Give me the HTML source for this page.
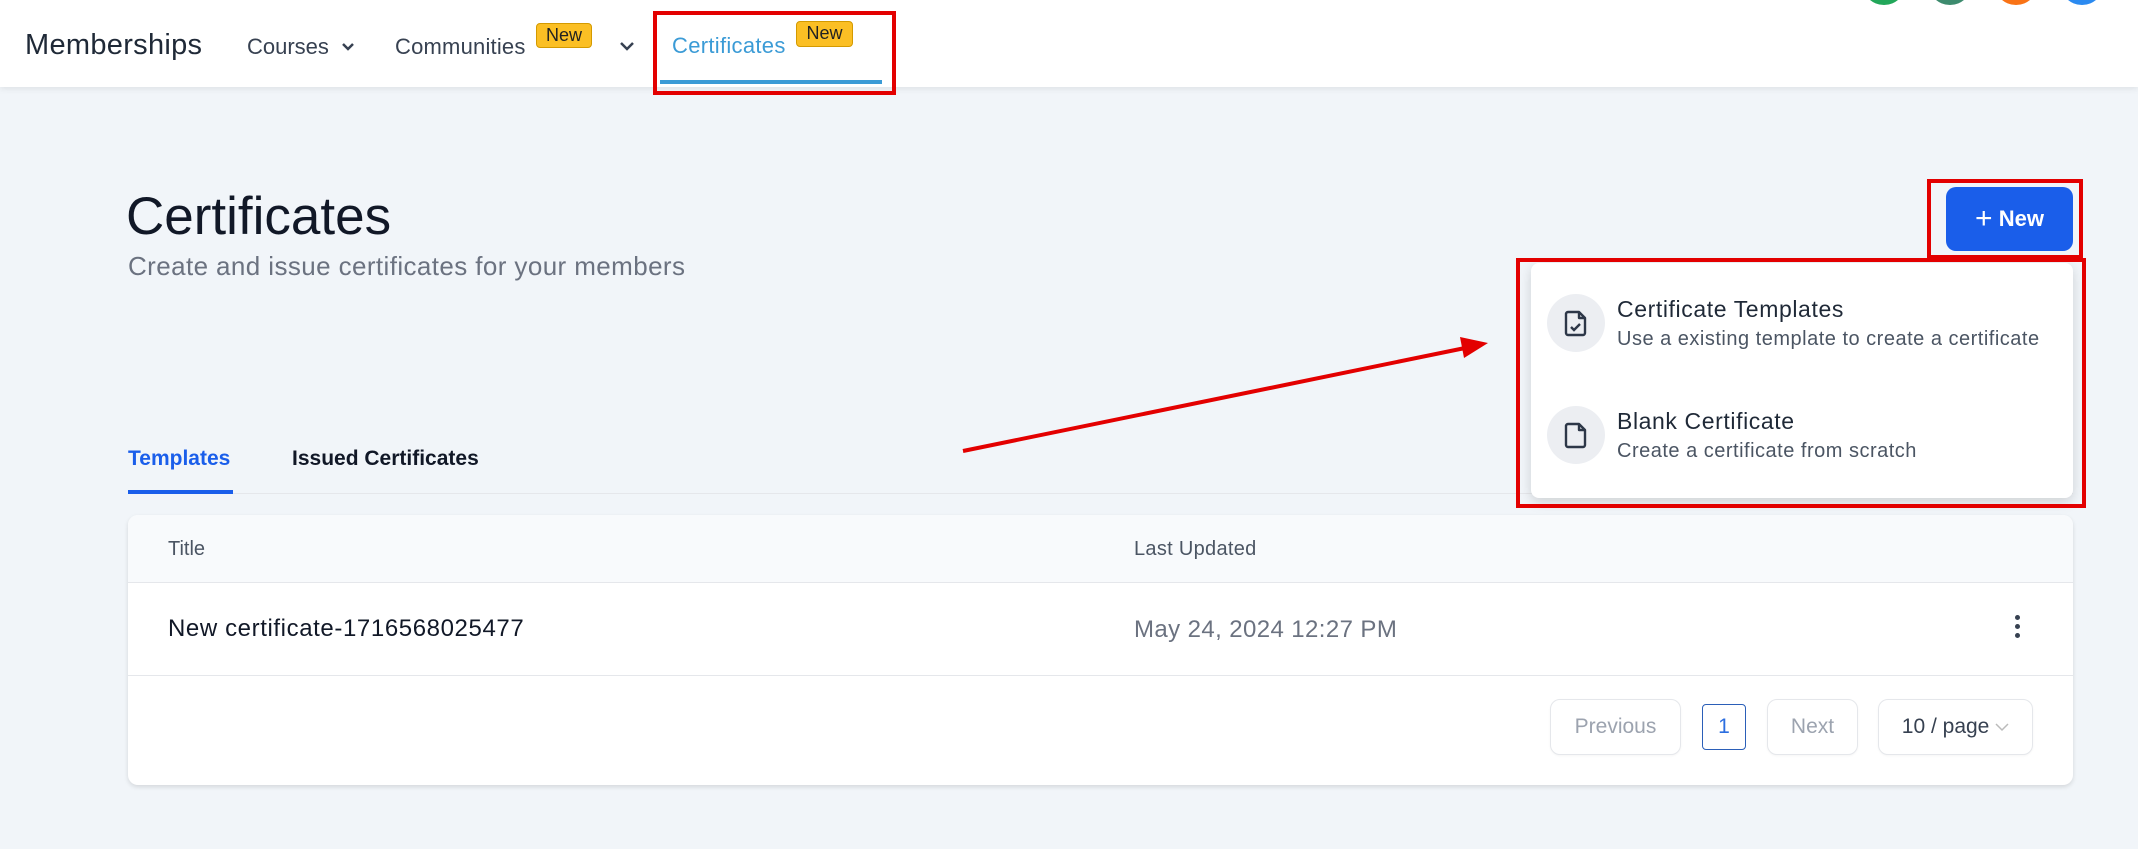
<!DOCTYPE html>
<html><head><meta charset="utf-8"><style>
*{box-sizing:border-box;margin:0;padding:0}
body{width:2138px;height:849px;background:#f1f5f9;font-family:"Liberation Sans",sans-serif;position:relative;overflow:hidden}
.a{position:absolute;white-space:nowrap}
.nav{position:absolute;left:0;top:0;width:2138px;height:87px;background:#fff;box-shadow:0 2px 6px rgba(0,0,0,.08)}
.badge{position:absolute;background:#fbbf24;border:1px solid #d49a00;border-radius:4px;font-size:18px;color:#222;text-align:center;line-height:22px}
.av{position:absolute;width:44px;height:44px;border-radius:50%;top:-39px}
.btn{position:absolute;border:1px solid #e5e7eb;border-radius:10px;background:#fff;font-size:21px;color:#9ca3af;text-align:center;box-shadow:0 1px 2px rgba(0,0,0,.04)}
.ic{position:absolute;width:58px;height:58px;border-radius:50%;background:#eceef2}
</style></head><body>
<div class="nav"></div>
<div class="a" style="left:25px;top:29px;font-size:29px;color:#1f2937;letter-spacing:0.3px">Memberships</div>
<div class="a" style="left:247px;top:34px;font-size:22px;color:#374151">Courses</div>
<svg class="a" style="left:341px;top:42px" width="14" height="10"><path d="M2 2l5 5 5-5" stroke="#374151" stroke-width="2.5" fill="none"/></svg>
<div class="a" style="left:395px;top:34px;font-size:22px;color:#374151;letter-spacing:0.2px">Communities</div>
<div class="badge" style="left:536px;top:23px;width:56px;height:25px">New</div>
<svg class="a" style="left:619px;top:40px" width="16" height="12"><path d="M2 3l6 6 6-6" stroke="#374151" stroke-width="2.5" fill="none"/></svg>
<div class="a" style="left:672px;top:33px;font-size:22px;color:#3b9bd6;letter-spacing:0.3px">Certificates</div>
<div class="badge" style="left:796px;top:21px;width:57px;height:26px">New</div>
<div class="a" style="left:660px;top:80px;width:222px;height:4px;background:#3b9bd6"></div>
<div class="a" style="left:653px;top:11px;width:243px;height:84px;border:4px solid #e30000"></div>
<div class="av" style="left:1862px;background:#22a75a"></div>
<div class="av" style="left:1928px;background:#3d8b6e"></div>
<div class="av" style="left:1994px;background:#f97316"></div>
<div class="av" style="left:2060px;background:#2b8af0"></div>

<div class="a" style="left:126px;top:186px;font-size:53px;color:#111827">Certificates</div>
<div class="a" style="left:128px;top:251px;font-size:26px;color:#6b7280;letter-spacing:0.4px">Create and issue certificates for your members</div>

<div class="a" style="left:1946px;top:187px;width:127px;height:64px;background:#1a5eea;border-radius:10px;color:#fff;font-size:22px;font-weight:bold;line-height:64px;text-align:center"><span style="font-weight:normal;font-size:30px;vertical-align:-2px">+</span> New</div>
<div class="a" style="left:1927px;top:179px;width:156px;height:80px;border:4px solid #e30000"></div>

<div class="a" style="left:128px;top:447px;font-size:21px;font-weight:bold;color:#1a5eea">Templates</div>
<div class="a" style="left:292px;top:447px;font-size:21px;font-weight:bold;color:#111827">Issued Certificates</div>
<div class="a" style="left:128px;top:493px;width:1945px;height:1px;background:#e5e7eb"></div>
<div class="a" style="left:128px;top:490px;width:105px;height:4px;background:#1a5eea"></div>

<div class="a" style="left:128px;top:515px;width:1945px;height:270px;background:#fff;border-radius:10px;box-shadow:0 2px 5px rgba(0,0,0,.12);overflow:hidden">
<div style="position:absolute;left:0;top:0;width:100%;height:68px;background:#f8fafc;border-bottom:1px solid #e5e7eb"></div>
<div class="a" style="left:40px;top:23px;font-size:20px;color:#4b5563">Title</div>
<div class="a" style="left:1006px;top:23px;font-size:20px;color:#4b5563;letter-spacing:0.3px">Last Updated</div>
<div class="a" style="left:40px;top:100px;font-size:24px;color:#111827;letter-spacing:0.6px">New certificate-1716568025477</div>
<div class="a" style="left:1006px;top:101px;font-size:24px;color:#6b7280;letter-spacing:0.4px">May 24, 2024 12:27 PM</div>
<div class="a" style="left:1887px;top:100px;width:5px;height:5px;border-radius:50%;background:#374151;box-shadow:0 9px 0 #374151,0 18px 0 #374151"></div>
<div style="position:absolute;left:0;top:160px;width:100%;height:1px;background:#e5e7eb"></div>
</div>
<div class="btn" style="left:1550px;top:699px;width:131px;height:56px;line-height:54px">Previous</div>
<div class="btn" style="left:1702px;top:704px;width:44px;height:46px;line-height:44px;border:1.5px solid #2b5fb8;border-radius:4px;color:#2b6ee0;box-shadow:none">1</div>
<div class="btn" style="left:1767px;top:699px;width:91px;height:56px;line-height:54px">Next</div>
<div class="btn" style="left:1878px;top:699px;width:155px;height:56px;line-height:54px;color:#374151">10 / page <svg width="14" height="10" style="vertical-align:1px"><path d="M1 2l6 6 6-6" stroke="#bbb" stroke-width="1.5" fill="none"/></svg></div>

<div class="a" style="left:1531px;top:263px;width:542px;height:235px;background:#fff;border-radius:8px;box-shadow:0 4px 12px rgba(0,0,0,.15)"></div>
<div class="ic" style="left:1547px;top:294px"></div>
<svg class="a" style="left:1561px;top:308px" width="30" height="30" viewBox="0 0 30 30"><path d="M7 4h11l6 6v15a2 2 0 0 1-2 2H7a2 2 0 0 1-2-2V6a2 2 0 0 1 2-2zM18 4v6h6" stroke="#2d3748" stroke-width="2.4" fill="none" stroke-linejoin="round"/><path d="M10 19l3 3 6-6" stroke="#2d3748" stroke-width="2.4" fill="none"/></svg>
<div class="a" style="left:1617px;top:296px;font-size:23px;color:#1f2937;letter-spacing:0.6px">Certificate Templates</div>
<div class="a" style="left:1617px;top:328px;font-size:20px;color:#4b5563;letter-spacing:0.5px">Use a existing template to create a certificate</div>
<div class="ic" style="left:1547px;top:406px"></div>
<svg class="a" style="left:1561px;top:420px" width="30" height="30" viewBox="0 0 30 30"><path d="M7 4h11l6 6v15a2 2 0 0 1-2 2H7a2 2 0 0 1-2-2V6a2 2 0 0 1 2-2zM18 4v6h6" stroke="#2d3748" stroke-width="2.4" fill="none" stroke-linejoin="round"/></svg>
<div class="a" style="left:1617px;top:408px;font-size:23px;color:#1f2937;letter-spacing:0.6px">Blank Certificate</div>
<div class="a" style="left:1617px;top:440px;font-size:20px;color:#4b5563;letter-spacing:0.5px">Create a certificate from scratch</div>
<div class="a" style="left:1516px;top:258px;width:570px;height:250px;border:4px solid #e30000"></div>

<svg class="a" style="left:0;top:0" width="2138" height="849"><line x1="963" y1="451" x2="1470" y2="347" stroke="#e30000" stroke-width="4"/><polygon points="1488,343 1460,337 1464,358" fill="#e30000"/></svg>
</body></html>
